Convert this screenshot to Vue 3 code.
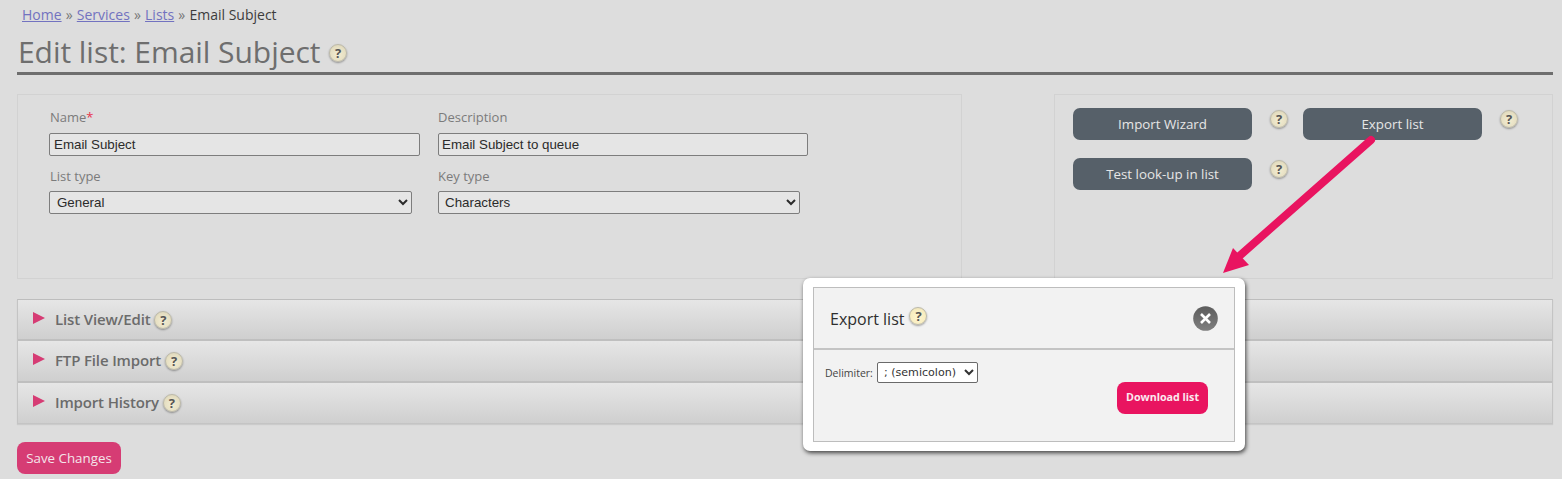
<script setup>
const rows = ['List View/Edit', 'FTP File Import', 'Import History']
</script>

<template>
  <div class="page">
    <nav class="crumbs">
      <a>Home</a><span class="sep"> » </span><a>Services</a><span class="sep"> » </span><a>Lists</a><span class="sep"> » </span><span>Email Subject</span>
    </nav>
    <h1 class="title">Edit list: Email Subject <span class="help title-help">?</span></h1>

    <div class="panels">
      <section class="panel form-panel">
        <div class="form-row first">
          <label class="field name">
            <span class="lbl">Name<em>*</em></span>
            <input class="inp w371" value="Email Subject" />
          </label>
          <label class="field">
            <span class="lbl">Description</span>
            <input class="inp w370" value="Email Subject to queue" />
          </label>
        </div>
        <div class="form-row">
          <label class="field name">
            <span class="lbl">List type</span>
            <select class="sel w363"><option>General</option></select>
          </label>
          <label class="field">
            <span class="lbl">Key type</span>
            <select class="sel w362"><option>Characters</option></select>
          </label>
        </div>
      </section>

      <section class="panel action-panel">
        <div class="action-grid">
          <button class="dark">Import Wizard</button><span class="help">?</span>
          <button class="dark">Export list</button><span class="help">?</span>
          <button class="dark">Test look-up in list</button><span class="help">?</span>
        </div>
      </section>
    </div>

    <div class="accordion">
      <div v-for="r in rows" :key="r" class="acc-row">
        <span class="tri"></span>
        <span class="acc-label">{{ r }}</span>
        <span class="help">?</span>
      </div>
    </div>

    <button class="save">Save Changes</button>

    <svg class="arrow" width="180" height="145" viewBox="1200 135 180 145" aria-hidden="true">
      <path d="M1371 140 L1236 259" stroke="#e91460" stroke-width="8" stroke-linecap="round" fill="none" />
      <path d="M1223 273 L1233 248 L1249 265 Z" fill="#e91460" />
    </svg>

    <div class="modal">
      <div class="modal-inner">
        <header class="modal-head">
          <h2>Export list</h2>
          <span class="help modal-help">?</span>
          <svg class="close" width="25" height="25" viewBox="0 0 25 25" aria-hidden="true">
            <defs>
              <linearGradient id="cg" x1="0" y1="0" x2="0" y2="1">
                <stop offset="0" stop-color="#5c5c5c" />
                <stop offset="1" stop-color="#808080" />
              </linearGradient>
            </defs>
            <circle cx="12.5" cy="12.5" r="12.3" fill="url(#cg)" />
            <path d="M8 8 L17 17 M17 8 L8 17" stroke="#fff" stroke-width="2.6" />
          </svg>
        </header>
        <div class="modal-body">
          <div class="delim">
            <span>Delimiter:</span>
            <select class="delim-sel"><option>; (semicolon)</option></select>
          </div>
          <button class="download">Download list</button>
        </div>
      </div>
    </div>
  </div>
</template>

<style>
html, body { margin: 0; background: #dddddd; }
</style>

<style scoped>
.page {
  position: relative;
  width: 1562px;
  height: 479px;
  overflow: hidden;
  background: #dddddd;
  font-family: "Open Sans", sans-serif;
  color: #6b6b6b;
  padding: 0 9px 0 17px;
  box-sizing: border-box;
}
.crumbs {
  padding: 5px 0 0 5px;
  height: 25px;
  box-sizing: border-box;
  font-size: 14px;
  line-height: 19px;
  color: #3c3c3c;
  white-space: pre;
}
.crumbs a { color: #7272c0; text-decoration: underline; }
.crumbs .sep { color: #777; word-spacing: .5px; }
.title {
  margin: 0;
  height: 50px;
  box-sizing: border-box;
  border-bottom: 3px solid #6e6e6e;
  padding-left: 1px;
  font-size: 30px;
  font-weight: 400;
  line-height: 54px;
  letter-spacing: -.05px;
  color: #6e6e6e;
  white-space: nowrap;
}
.help {
  display: inline-block;
  width: 18px;
  height: 18px;
  box-sizing: border-box;
  border-radius: 50%;
  border: 1px solid #bcb9a8;
  background: radial-gradient(circle at 50% 60%, #f2ecd2 0%, #e6dfc2 60%, #d6d0b6 100%);
  box-shadow: 0 1px 2px rgba(0, 0, 0, .35);
  color: #555;
  font-family: "Open Sans", sans-serif;
  font-size: 13px;
  font-weight: 700;
  line-height: 16px;
  letter-spacing: 0;
  text-align: center;
  flex: none;
}
.title-help { vertical-align: 5px; margin-left: 1px; }
.panels {
  display: flex;
  justify-content: space-between;
  margin-top: 19px;
}
.panel {
  height: 185px;
  box-sizing: border-box;
  border: 1px solid #d2d2d2;
}
.form-panel { width: 945px; padding: 13px 0 0 31px; }
.action-panel { width: 499px; padding: 13px 0 0 18px; }
.form-row { display: flex; gap: 0; margin-top: 11px; }
.form-row.first { margin-top: 0; }
.field { display: flex; flex-direction: column; }
.field.name { width: 389px; }
.lbl {
  font-size: 13px;
  line-height: 18px;
  color: #7b7b7b;
  margin-bottom: 7px;
}
.field.name .lbl { padding-left: 1px; }
.form-row:not(.first) .lbl { margin-bottom: 6px; }
.lbl em { color: #e8344e; font-style: normal; }
.inp, .sel {
  height: 23px;
  box-sizing: border-box;
  border: 1px solid #7d7d7d;
  border-radius: 2px;
  background: #e5e5e5;
  color: #2b2b2b;
  font-family: "Liberation Sans", Arial, sans-serif;
  font-size: 13.33px;
  padding: 0 4px;
  outline: none;
}
.sel { padding: 0 3px; }
.w371 { width: 371px; }
.w370 { width: 370px; padding-left: 3px; }
.w363 { width: 363px; }
.w362 { width: 362px; padding-left: 2px; }
.action-grid {
  display: grid;
  grid-template-columns: 179px 51px 179px 40px;
  grid-auto-rows: 32px;
  row-gap: 18px;
  align-items: start;
}
.action-grid .help { margin: 2px 0 0 18px; }
.dark {
  height: 32px;
  border: 0;
  border-radius: 7px;
  background: #566069;
  color: #e6e6e6;
  font-family: "Open Sans", sans-serif;
  font-size: 13.33px;
  padding: 0;
}
.accordion {
  margin-top: 20px;
  border: 1px solid #c4c4c4;
  border-top-color: #bdbdbd;
  box-shadow: 0 1px 1px rgba(0, 0, 0, .08);
}
.acc-row {
  height: 42px;
  box-sizing: border-box;
  display: flex;
  align-items: center;
  padding: 0 0 0 15px;
  background: linear-gradient(#e6e6e6, #cfcfcf);
  border-bottom: 2px solid #bfbfbf;
  color: #6b6b6b;
  font-size: 15px;
  font-weight: 600;
}
.acc-row:first-child { height: 41px; }
.acc-row:last-child { border-bottom: 0; height: 40px; }
.tri {
  width: 0;
  height: 0;
  border-left: 12px solid #d63c74;
  border-top: 6px solid transparent;
  border-bottom: 6px solid transparent;
  margin: -4px 10px 0 0;
}
.acc-label { margin: -2px 4px 0 0; letter-spacing: -.15px; }
.save {
  display: block;
  margin-top: 18px;
  width: 104px;
  height: 32px;
  border: 0;
  border-radius: 8px;
  background: #d63c74;
  color: #f4e4ea;
  font-family: "Open Sans", sans-serif;
  font-size: 13.33px;
  padding: 0;
}
.arrow { position: absolute; left: 1200px; top: 135px; }
.modal {
  position: absolute;
  left: 803px;
  top: 278px;
  width: 442px;
  height: 173px;
  box-sizing: border-box;
  background: #fff;
  border-radius: 7px;
  padding: 9px 10px;
  box-shadow: 1px 2px 4px rgba(0, 0, 0, .7);
}
.modal-inner {
  height: 155px;
  box-sizing: border-box;
  border: 1px solid #bdbdbd;
  background: #f2f2f2;
  display: flex;
  flex-direction: column;
}
.modal-head {
  height: 62px;
  box-sizing: border-box;
  border-bottom: 2px solid #c4c4c4;
  display: flex;
  align-items: flex-start;
  padding: 18px 16px 0 16px;
}
.modal-head h2 {
  margin: 2px 5px 0 0;
  font-size: 16px;
  font-weight: 500;
  line-height: 22px;
  color: #2e2e2e;
}
.modal-help {
  background: radial-gradient(circle at 50% 60%, #fff6cf 0%, #f8edc0 60%, #e8dfb8 100%);
  margin-top: 1px;
}
.close { margin: 0 0 0 auto; }
.modal-body { position: relative; flex: 1; padding: 12px 0 0 11px; }
.delim { display: flex; align-items: center; gap: 4px; font-size: 10.5px; color: #444; }
.delim-sel {
  width: 101px;
  height: 21px;
  box-sizing: border-box;
  border: 1px solid #6a6a6a;
  border-radius: 2px;
  background: #fff;
  color: #333;
  font-family: "DejaVu Sans", sans-serif;
  font-size: 11.1px;
  padding: 0 2px;
  outline: none;
}
.download {
  position: absolute;
  left: 303px;
  top: 32px;
  width: 91px;
  height: 32px;
  border: 0;
  border-radius: 8px;
  background: #e91460;
  color: #fbe9ef;
  font-family: "Open Sans", sans-serif;
  font-size: 10.7px;
  font-weight: 700;
  padding: 0 0 2px;
}
</style>
